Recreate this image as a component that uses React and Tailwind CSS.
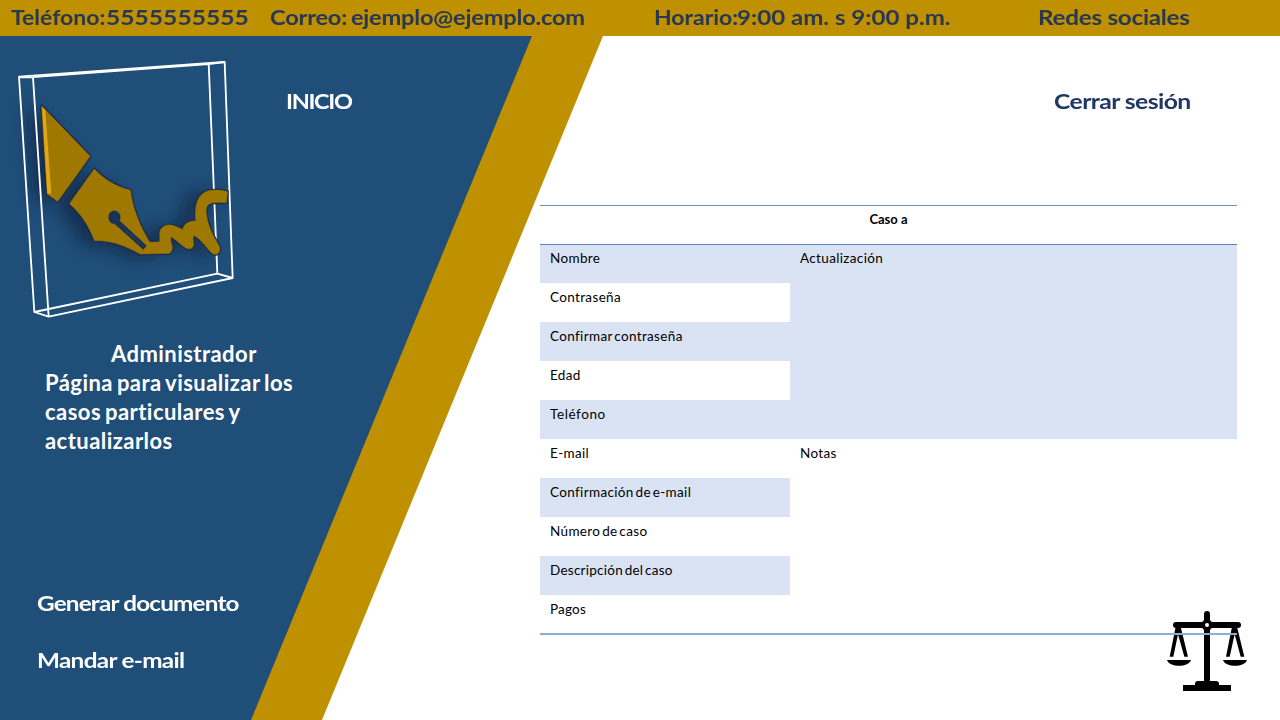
const fields = [
  { text: "Nombre", cls: "h-[38px] bg-[#dae3f3] pt-[5px]" },
  { text: "Contraseña", cls: "h-[39px] bg-white pt-[6px]" },
  { text: "Confirmar contraseña", cls: "h-[39px] bg-[#dae3f3] pt-[6px]" },
  { text: "Edad", cls: "h-[39px] bg-white pt-[6px]" },
  { text: "Teléfono", cls: "h-[39px] bg-[#dae3f3] pt-[6px] tracking-[0.6px]" },
  { text: "E-mail", cls: "h-[39px] bg-white pt-[6px]" },
  { text: "Confirmación de e-mail", cls: "h-[39px] bg-[#dae3f3] pt-[6px]" },
  { text: "Número de caso", cls: "h-[39px] bg-white pt-[6px]" },
  { text: "Descripción del caso", cls: "h-[39px] bg-[#dae3f3] pt-[6px] tracking-[0.25px]" },
  { text: "Pagos", cls: "h-[38px] bg-white pt-[6px] tracking-[0.2px]" },
];

function PenLogo() {
  return (
    <svg viewBox="0 0 780 840" className="h-[280px] w-[260px]" fill="none">
      <defs>
        <filter id="soft" x="-40%" y="-40%" width="180%" height="180%">
          <feGaussianBlur stdDeviation="22" />
        </filter>
        <filter id="edge" x="-10%" y="-10%" width="120%" height="120%">
          <feGaussianBlur stdDeviation="2" />
        </filter>
        <g id="pen">
          <path d="M125 168 L270 319 L173 454 L142 432 Z" />
          <path
            fillRule="evenodd"
            d="M283 357 C312 388 345 409 391 421 C397 475 420 530 449 577 L441 587 L360 512 A19 21 0 1 0 344 523 L430 600 L419 611 C375 586 330 570 284 572 C268 530 245 492 209 461 Z"
          />
          <path d="M449 577 L478 576 C484 562 472 545 488 532 C505 519 520 525 548 539 C552 522 565 513 588 513 C584 480 588 445 610 430 C630 417 655 419 682 425 L679 458 C645 456 618 455 618 482 C620 525 640 558 657 588 C665 604 650 620 636 610 C620 595 608 572 582 556 C572 570 590 586 572 596 C552 598 535 572 513 560 C506 575 528 595 508 610 L419 612 L430 600 Z" />
        </g>
      </defs>
      <g filter="url(#soft)" opacity="0.6" transform="translate(-38 8)">
        <use href="#pen" fill="#101c38" stroke="#101c38" strokeWidth="10" />
      </g>
      <g stroke="#ffffff" strokeWidth="5.5" strokeLinejoin="round">
        <path d="M57 80 L674 36 L698 684 L146 800 L103 786 Z" />
        <path d="M57 82 L99 82 L146 800 M99 81 L626 42 L674 36 M626 40 L652 671 L698 684 M652 671 L103 786" />
      </g>
      <g filter="url(#edge)" stroke="#1b2b4a" strokeWidth="9" strokeLinejoin="round">
        <use href="#pen" />
      </g>
      <use href="#pen" fill="#9e7800" stroke="#9e7800" strokeWidth="2" />
      <path d="M126 172 L136 181 L154 432 L142 430 Z" fill="#e0a812" />
    </svg>
  );
}

function Scales() {
  return (
    <svg viewBox="0 0 360 330" className="h-[110px] w-[120px]" fill="#000000">
      <rect x="162" y="33" width="18" height="215" rx="9" />
      <rect x="69" y="66" width="204" height="18" rx="9" />
      <circle cx="171" cy="75" r="17" />
      <circle cx="171" cy="75" r="6" fill="#ffffff" />
      <path d="M77 80 H92 L114 170 H103 L84 103 L70 170 H59 Z" />
      <path d="M246 80 H261 L283 170 H272 L254 103 L239 170 H228 Z" />
      <path d="M51 180 H123 C117 203 57 203 51 180 Z" />
      <path d="M219 180 H291 C285 203 225 203 219 180 Z" />
      <path d="M99 255 H135 V252 Q135 243 144 243 H198 Q207 243 207 252 V255 H243 V273 H99 Z" />
    </svg>
  );
}

export default function App() {
  return (
    <div className="flex h-[720px] w-[1280px] flex-col overflow-hidden bg-white font-['Lato',sans-serif]">
      <header className="flex h-9 shrink-0 bg-[#bf9000] pl-[11px] text-[21.5px] leading-[34px] font-bold whitespace-nowrap text-[#283850]">
        <div className="flex w-[259px]">
          <span className="w-[95px] origin-left scale-x-[1.07]">Teléfono:</span>
          <span className="origin-left scale-x-[1.145]">5555555555</span>
        </div>
        <div className="w-[384px]">
          <span className="inline-block origin-left scale-x-[1.1] tracking-[-0.2px] [word-spacing:-1.5px]">
            Correo: ejemplo@ejemplo.com
          </span>
        </div>
        <div className="flex w-[384px]">
          <span className="w-[83px] origin-left scale-x-[1.07]">Horario:</span>
          <span className="origin-left scale-x-[1.12]">9:00 am. s 9:00 p.m.</span>
        </div>
        <div>
          <span className="inline-block origin-left scale-x-[1.13] tracking-[-0.25px]">Redes sociales</span>
        </div>
      </header>

      <div className="flex flex-1">
        <div className="w-[603px] shrink-0 bg-[#bf9000] [clip-path:polygon(0_0,603px_0,322px_100%,0_100%)]">
          <aside className="flex h-full w-[532px] flex-col bg-[#1f4e79] text-white [clip-path:polygon(0_0,532px_0,251px_100%,0_100%)]">
            <div className="flex pt-[14px]">
              <PenLogo />
              <a className="mt-[34px] ml-[26px] h-8 origin-left scale-x-[1.12] text-[21px] leading-[33px] font-bold tracking-[-1.2px]">
                INICIO
              </a>
            </div>
            <div className="mt-[9px] flex flex-col pl-[45px] text-[22px] leading-[29px] font-bold tracking-[0.45px] whitespace-nowrap">
              <h1 className="pl-[66px]">Administrador</h1>
              <p className="[word-spacing:-1.8px]">
                Página para visualizar los
                <br />
                casos particulares y
                <br />
                actualizarlos
              </p>
            </div>
            <nav className="mt-[132px] flex flex-col items-start gap-[25px] pl-[37px] text-[21.5px] leading-[32px] font-bold whitespace-nowrap">
              <a className="origin-left scale-x-[1.13] tracking-[-0.73px]">Generar documento</a>
              <a className="origin-left scale-x-[1.13] tracking-[-0.6px]">Mandar e-mail</a>
            </nav>
          </aside>
        </div>

        <main className="relative -ml-[63px] flex flex-1 flex-col items-start">
          <a className="mt-[49px] ml-[514px] origin-left scale-x-[1.15] text-[21.5px] leading-[33px] font-bold tracking-[-0.5px] text-[#203864]">
            Cerrar sesión
          </a>
          <div className="absolute top-[564px] left-[610px]">
            <Scales />
          </div>
          <section className="relative mt-[87px] w-[697px] border-t border-b-2 border-t-[#6c8fc4] border-b-[#8faccb] text-[13.5px] leading-[17px] tracking-[0.35px] text-black [word-spacing:-2px]">
            <div className="h-[39px] border-b border-[#5b80bd] pt-[5px] text-center text-[13px] font-bold tracking-normal [word-spacing:0px]">
              Caso a
            </div>
            <div className="grid grid-cols-[250px_447px]">
              <div>
                {fields.map((f) => (
                  <div key={f.text} className={`pl-[10px] ${f.cls}`}>
                    {f.text}
                  </div>
                ))}
              </div>
              <div>
                <div className="h-[194px] bg-[#dae3f3] pt-[5px] pl-[10px]">Actualización</div>
                <div className="pt-[6px] pl-[10px]">Notas</div>
              </div>
            </div>
          </section>
        </main>
      </div>
    </div>
  );
}
